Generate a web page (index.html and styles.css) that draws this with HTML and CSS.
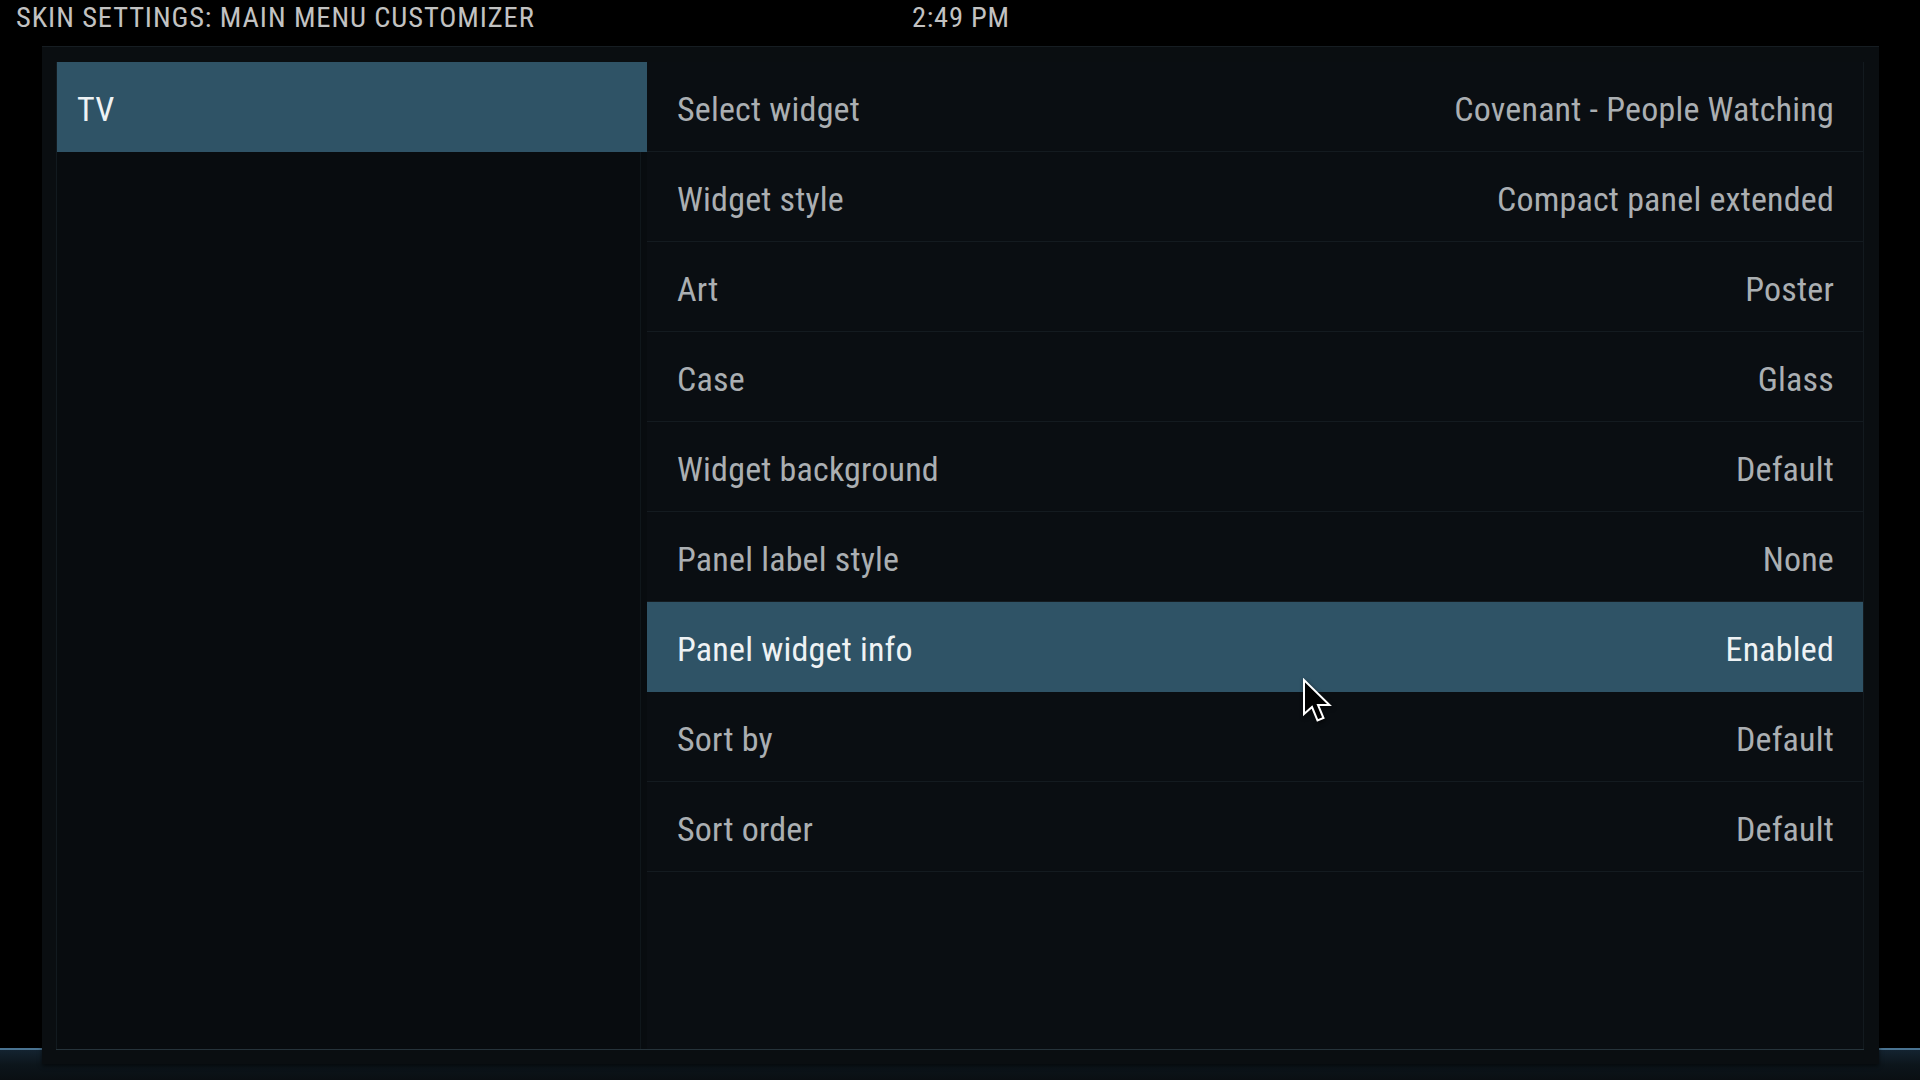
FILE: index.html
```html
<!DOCTYPE html>
<html lang="en">
<head>
<meta charset="utf-8">
<title>Skin settings: Main menu customizer</title>
<link rel="stylesheet" href="styles.css">
</head>
<body>
<div class="screen">
  <header class="topbar">
    <div class="title">SKIN SETTINGS: MAIN MENU CUSTOMIZER</div>
    <div class="clock">2:49 PM</div>
  </header>

  <div class="bottombar"></div>

  <main class="frame">
    <div class="inner">
      <nav class="menu">
        <div class="menu-item is-focused">TV</div>
      </nav>
      <section class="settings">
        <div class="row"><span class="label">Select widget</span><span class="value">Covenant - People Watching</span></div>
        <div class="row"><span class="label">Widget style</span><span class="value">Compact panel extended</span></div>
        <div class="row"><span class="label">Art</span><span class="value">Poster</span></div>
        <div class="row"><span class="label">Case</span><span class="value">Glass</span></div>
        <div class="row"><span class="label">Widget background</span><span class="value">Default</span></div>
        <div class="row"><span class="label">Panel label style</span><span class="value">None</span></div>
        <div class="row is-focused"><span class="label">Panel widget info</span><span class="value">Enabled</span></div>
        <div class="row"><span class="label">Sort by</span><span class="value">Default</span></div>
        <div class="row"><span class="label">Sort order</span><span class="value">Default</span></div>
      </section>
    </div>
  </main>

  <svg class="cursor" width="32" height="46" viewBox="0 0 32 46" aria-hidden="true">
    <path d="M2 2 L2 36 L10 29 L15.5 42.5 L21.5 40 L16 27 L27.5 27 Z" fill="#000" stroke="#fff" stroke-width="2" stroke-linejoin="miter"/>
  </svg>
</div>
</body>
</html>
```

FILE: styles.css
```css
* {
  box-sizing: border-box;
}

html, body {
  margin: 0;
  padding: 0;
  background: #000;
}

body {
  font-family: "Roboto Condensed", Roboto, "Liberation Sans", sans-serif;
}

.screen {
  position: relative;
  width: 1920px;
  height: 1080px;
  overflow: hidden;
  background: #000;
}

.topbar {
  display: grid;
  grid-template-columns: 896px auto;
  height: 46px;
  padding-left: 16px;
  font-size: 28.5px;
  line-height: 36px;
  color: #c2c2c2;
}

.title {
  letter-spacing: 0.9px;
}

.clock {
  letter-spacing: 0.7px;
}

.bottombar {
  position: absolute;
  left: 0;
  right: 0;
  top: 1048px;
  height: 32px;
  border-top: 2px solid #4a7391;
  background: linear-gradient(180deg, #142330 0%, #0c151b 50%, #0a0f13 100%);
}

.frame {
  position: relative;
  z-index: 1;
  margin-left: 42px;
  width: 1837px;
  height: 1018px;
  padding: 15px 15px 0 14px;
  background: #0a0e11;
  border-top: 1px solid #161d22;
  box-shadow: 0 2px 4px rgba(0, 0, 0, 0.6);
}

.inner {
  display: flex;
  height: 988px;
  border-bottom: 1px solid #26333a;
}

.menu {
  width: 591px;
  border-left: 1px solid #121a1f;
  background: #080c0f;
  position: relative;
}

.menu::after {
  content: "";
  position: absolute;
  top: 0;
  bottom: 0;
  right: 6px;
  width: 1px;
  background: #10171b;
}

.menu-item {
  position: relative;
  z-index: 1;
  height: 90px;
  padding: 6px 0 0 20px;
  line-height: 83px;
  font-size: 34px;
  letter-spacing: 0.2px;
  color: #b0b3b5;
}

.menu-item.is-focused {
  background: #2f5366;
  color: #eef2f4;
}

.settings {
  width: 1217px;
  border-right: 1px solid #131a1f;
  background: #0a0e12;
}

.row {
  display: flex;
  justify-content: space-between;
  height: 90px;
  padding: 6px 29px 0 30px;
  line-height: 82px;
  font-size: 34px;
  letter-spacing: 0.2px;
  color: #abafb2;
  border-bottom: 1px solid #141b20;
}

.row.is-focused {
  background: #2f5366;
  color: #eef2f4;
  border-bottom-color: #2f5366;
}

.cursor {
  position: absolute;
  z-index: 5;
  left: 1302px;
  top: 678px;
  filter: drop-shadow(1px 2px 2px rgba(0, 0, 0, 0.6));
}
```
